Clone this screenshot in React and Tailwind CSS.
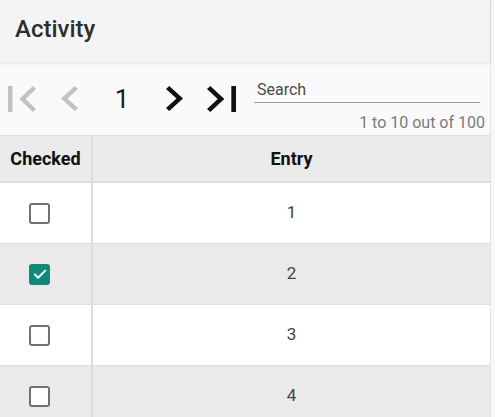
import React from "react";

const rows = [
  { id: 1, checked: false },
  { id: 2, checked: true },
  { id: 3, checked: false },
  { id: 4, checked: false },
];

function FirstPage({ className }) {
  return (
    <svg viewBox="6 6 12.41 12" preserveAspectRatio="none" className={className}>
      <path d="M18.41 16.59L13.82 12l4.59-4.59L17 6l-6 6 6 6zM6 6h2v12H6z" fill="currentColor" />
    </svg>
  );
}

function PrevPage({ className }) {
  return (
    <svg viewBox="8 6 7.41 12" preserveAspectRatio="none" className={className}>
      <path d="M15.41 7.41L14 6l-6 6 6 6 1.41-1.41L10.83 12z" fill="currentColor" />
    </svg>
  );
}

function NextPage({ className }) {
  return (
    <svg viewBox="8.59 6 7.41 12" preserveAspectRatio="none" className={className}>
      <path d="M10 6L8.59 7.41 13.17 12l-4.58 4.59L10 18l6-6z" fill="currentColor" />
    </svg>
  );
}

function LastPage({ className }) {
  return (
    <svg viewBox="5.59 6 12.41 12" preserveAspectRatio="none" className={className}>
      <path d="M5.59 7.41L10.18 12l-4.59 4.59L7 18l6-6-6-6zM16 6h2v12h-2z" fill="currentColor" />
    </svg>
  );
}

function Checkbox({ checked }) {
  if (checked) {
    return (
      <div className="w-[21px] h-[21px] rounded-[3px] bg-[#0f8a7a] flex items-center justify-center">
        <svg viewBox="0 0 24 24" className="w-[18px] h-[18px]">
          <path d="M5 12.5l4.5 4.5L19 7.5" fill="none" stroke="white" strokeWidth="2.6" strokeLinecap="round" strokeLinejoin="round" />
        </svg>
      </div>
    );
  }
  return <div className="w-[21px] h-[21px] rounded-[3px] border-[2.5px] border-[#717171] bg-white" />;
}

export default function App() {
  return (
    <div className="w-full h-[417px] overflow-hidden bg-[#f8f8f8] font-['Roboto',sans-serif]">
      <div className="w-[491px] h-full border-r border-[#e4e4e4] bg-white flex flex-col">
        <header className="relative z-10 shrink-0 h-[62px] bg-[#f4f4f4] pl-[15px] pt-[15px] shadow-[0_1px_3px_rgba(0,0,0,0.12)]">
          <h1 className="text-[24px] leading-[28px] font-medium text-[#2e2e2e]">Activity</h1>
        </header>

        <div className="shrink-0 h-[73px] bg-[#fafafa] flex">
          <div className="flex items-center pl-[8px] h-full">
            <FirstPage className="w-[28px] h-[26px] text-[#c2c2c2]" />
            <PrevPage className="ml-[25px] w-[17px] h-[25px] text-[#c2c2c2]" />
            <div className="w-[88px] flex justify-center text-[26px] leading-none text-[#1a1a1a]">1</div>
            <NextPage className="w-[17px] h-[25px] text-[#111]" />
            <LastPage className="ml-[24px] w-[29px] h-[26px] text-[#111]" />
          </div>
          <div className="flex-1 flex flex-col pl-[18px] pr-[5px] pt-[18px]">
            <div className="w-[226px] border-b border-[#9a9a9a] pb-[3px] pl-[3px] text-[16px] leading-[19px] text-[#4a4a4a]">
              Search
            </div>
            <div className="mt-[10px] text-right text-[16px] leading-[19px] text-[#7a7a7a]">1 to 10 out of 100</div>
          </div>
        </div>

        <div className="shrink-0 flex h-[48px] bg-[#ebebeb] border-t border-[#e0e0e0] border-b-2 border-b-[#dcdcdc]">
          <div className="w-[93px] shrink-0 border-r-2 border-[#dcdcdc] flex items-center justify-center text-[18px] font-bold text-[#111]">
            Checked
          </div>
          <div className="flex-1 flex items-center justify-center text-[18px] font-bold text-[#111]">Entry</div>
        </div>

        {rows.map((row) => (
          <div
            key={row.id}
            className={`flex h-[61px] shrink-0 border-b border-[#dedede] ${row.id % 2 === 0 ? "bg-[#eaeaea]" : "bg-white"}`}
          >
            <div className="w-[93px] shrink-0 border-r-2 border-[#dcdcdc] flex items-center pl-[29px]">
              <Checkbox checked={row.checked} />
            </div>
            <div className="flex-1 flex items-center justify-center text-[17px] text-[#444]">{row.id}</div>
          </div>
        ))}
      </div>
    </div>
  );
}
